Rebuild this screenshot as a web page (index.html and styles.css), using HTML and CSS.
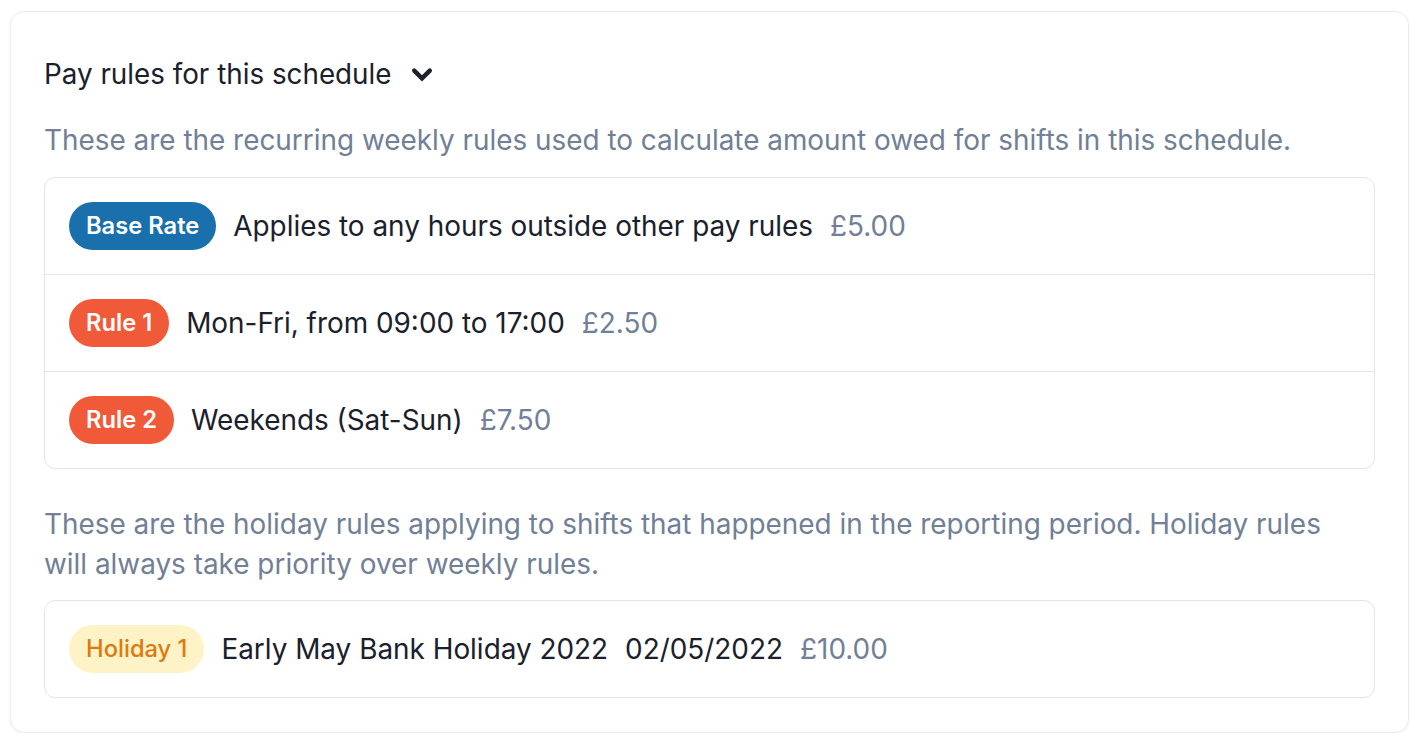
FILE: index.html
```html
<!DOCTYPE html>
<html>
<head>
<meta charset="utf-8">
<link rel="stylesheet" href="styles.css">
</head>
<body>
<div class="card">
  <div class="title">
    <span>Pay rules for this schedule</span>
    <svg class="chev" width="22" height="16" viewBox="0 0 22 16"><path d="M3.2 3.6 L11 11.4 L18.8 3.6" fill="none" stroke="#1a202c" stroke-width="4.4" stroke-linecap="round" stroke-linejoin="miter"/></svg>
  </div>
  <p class="desc">These are the recurring weekly rules used to calculate amount owed for shifts in this schedule.</p>
  <div class="list">
    <div class="row"><span class="badge blue">Base Rate</span><span class="txt">Applies to any hours outside other pay rules</span><span class="price">£5.00</span></div>
    <div class="row"><span class="badge red">Rule 1</span><span class="txt">Mon-Fri, from 09:00 to 17:00</span><span class="price">£2.50</span></div>
    <div class="row"><span class="badge red">Rule 2</span><span class="txt">Weekends (Sat-Sun)</span><span class="price">£7.50</span></div>
  </div>
  <p class="desc desc2">These are the holiday rules applying to shifts that happened in the reporting period. Holiday rules will always take priority over weekly rules.</p>
  <div class="list">
    <div class="row"><span class="badge yellow">Holiday 1</span><span class="txt">Early May Bank Holiday 2022</span><span class="txt">02/05/2022</span><span class="price">£10.00</span></div>
  </div>
</div>
</body>
</html>
```
FILE: styles.css
```css
* { box-sizing: border-box; }
body {
  margin: 0;
  padding: 11px 11px 0 10px;
  font-family: Inter, "Noto Sans", sans-serif;
  background: #fff;
  color: #1a202c;
}
.card {
  border: 1px solid #e9ebee;
  border-radius: 14px;
  box-shadow: 0 1px 3px rgba(0,0,0,0.06);
  padding: 42px 33px 33px 33px;
  height: 722px;
}
.title {
  display: flex;
  align-items: center;
  gap: 19px;
  font-size: 27.8px;
  line-height: 40px;
  height: 40px;
}
.chev { display: block; margin-top: 1px; }
.desc {
  margin: 26px 0 17px 0;
  font-size: 27.9px;
  line-height: 40px;
  color: #718096;
}
.desc2 { margin-top: 35px; margin-bottom: 16px; padding-right: 40px; }
.list {
  border: 1px solid #e2e5e9;
  border-radius: 11px;
}
.row {
  display: flex;
  align-items: center;
  gap: 17px;
  padding: 24px;
  font-size: 27.9px;
}
.row + .row { border-top: 1px solid #e2e5e9; }
.badge {
  height: 48px;
  line-height: 48px;
  border-radius: 24px;
  padding: 0 17px;
  font-size: 23.7px;
  font-weight: 600;
  color: #fff;
}
.blue { background: #1a6fad; }
.red { background: #f05a38; }
.yellow { background: #fef3c7; color: #dd7a0e; font-weight: 500; }
.price { color: #718096; }
```
